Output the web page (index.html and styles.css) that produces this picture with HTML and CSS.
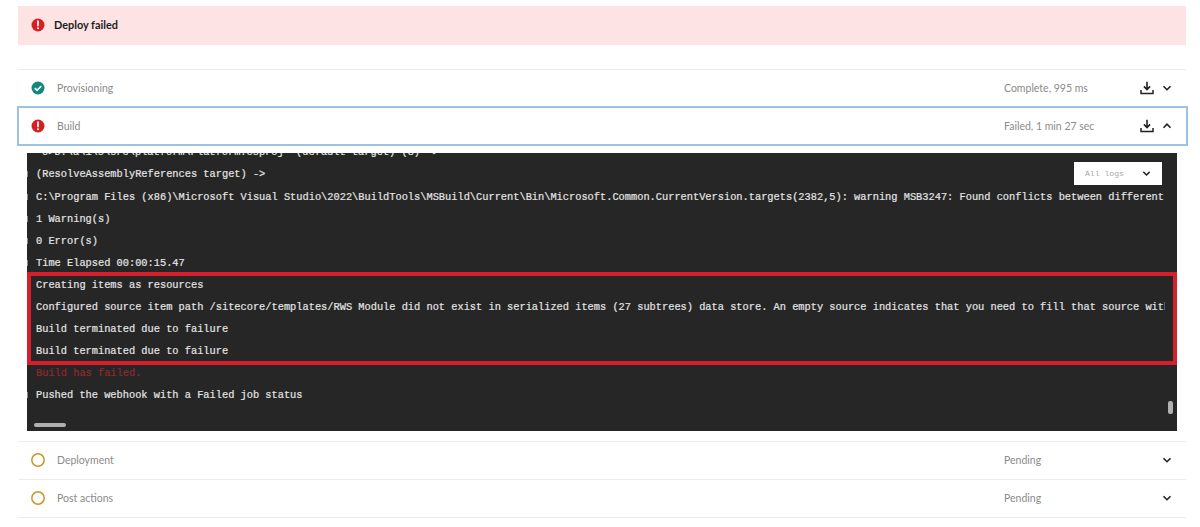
FILE: index.html
```html
<!DOCTYPE html>
<html lang="en">
<head>
<meta charset="utf-8">
<title>Deploy failed</title>
<link rel="stylesheet" href="styles.css">
</head>
<body>
<svg class="sprites" width="0" height="0" aria-hidden="true">
  <symbol id="i-alert" viewBox="0 0 14 14"><circle cx="7" cy="7" r="6.5" fill="#d32121"/><path d="M7 3.2v4.4" stroke="#fff" stroke-width="1.7" stroke-linecap="round"/><circle cx="7" cy="10.2" r="1" fill="#fff"/></symbol>
  <symbol id="i-check" viewBox="0 0 14 14"><circle cx="7" cy="7" r="6.5" fill="#0f8a7a"/><path d="M3.8 7.2l2.3 2.2 4.2-4.4" fill="none" stroke="#fff" stroke-width="1.7"/></symbol>
  <symbol id="i-pending" viewBox="0 0 14 14"><circle cx="7" cy="7" r="6.2" fill="none" stroke="#c9962b" stroke-width="1.5"/></symbol>
  <symbol id="i-download" viewBox="0 0 14 14"><path d="M7 .8v7.4M3.9 5.4L7 8.5l3.1-3.1" fill="none" stroke="#222" stroke-width="1.6"/><path d="M1 9v3.6h12V9" fill="none" stroke="#222" stroke-width="1.5"/></symbol>
  <symbol id="i-down" viewBox="0 0 10 10"><path d="M1.5 3.2L5 6.7l3.5-3.5" fill="none" stroke="#222" stroke-width="1.6"/></symbol>
  <symbol id="i-up" viewBox="0 0 10 10"><path d="M1.5 6.7L5 3.2l3.5 3.5" fill="none" stroke="#222" stroke-width="1.6"/></symbol>
</svg>
<main class="page">
  <div class="banner">
    <svg class="icon"><use href="#i-alert"/></svg>
    <strong>Deploy failed</strong>
  </div>
  <section class="steps">
    <div class="row">
      <svg class="icon"><use href="#i-check"/></svg>
      <span class="label">Provisioning</span>
      <span class="status">Complete, 995 ms</span>
      <svg class="dl"><use href="#i-download"/></svg>
      <svg class="chev"><use href="#i-down"/></svg>
    </div>
    <div class="row row-open">
      <svg class="icon"><use href="#i-alert"/></svg>
      <span class="label">Build</span>
      <span class="status">Failed, 1 min 27 sec</span>
      <svg class="dl"><use href="#i-download"/></svg>
      <svg class="chev"><use href="#i-up"/></svg>
    </div>
    <div class="terminal">
      <div class="log">
        <div class="line indent">0&gt;D:\a\1\s\src\platform\Platform.csproj" (default target) (8) -&gt;</div>
        <div class="line mark">(ResolveAssemblyReferences target) -&gt;</div>
        <div class="line mark">C:\Program Files (x86)\Microsoft Visual Studio\2022\BuildTools\MSBuild\Current\Bin\Microsoft.Common.CurrentVersion.targets(2382,5): warning MSB3247: Found conflicts between different versions</div>
        <div class="line mark">1 Warning(s)</div>
        <div class="line mark">0 Error(s)</div>
        <div class="line mark">Time Elapsed 00:00:15.47</div>
        <div class="line">Creating items as resources</div>
        <div class="line">Configured source item path /sitecore/templates/RWS Module did not exist in serialized items (27 subtrees) data store. An empty source indicates that you need to fill that source with items</div>
        <div class="line">Build terminated due to failure</div>
        <div class="line">Build terminated due to failure</div>
        <div class="line failed">Build has failed.</div>
        <div class="line mark">Pushed the webhook with a Failed job status</div>
      </div>
      <div class="filter"><span>All logs</span><svg class="chev-small"><use href="#i-down"/></svg></div>
      <div class="highlight"></div>
      <div class="thumb-h"></div>
      <div class="thumb-v"></div>
    </div>
    <div class="row">
      <svg class="icon"><use href="#i-pending"/></svg>
      <span class="label">Deployment</span>
      <span class="status">Pending</span>
      <span></span>
      <svg class="chev"><use href="#i-down"/></svg>
    </div>
    <div class="row row-last">
      <svg class="icon"><use href="#i-pending"/></svg>
      <span class="label">Post actions</span>
      <span class="status">Pending</span>
      <span></span>
      <svg class="chev"><use href="#i-down"/></svg>
    </div>
  </section>
</main>
</body>
</html>
```
FILE: styles.css
```css
* { box-sizing: border-box; }
html, body { margin: 0; height: 100%; background: #fff; overflow: hidden; }
body { font-family: Lato, "Noto Sans", sans-serif; font-size: 10.5px; color: #222; }
.sprites { position: absolute; }
.page { padding: 6px 14px 0 18px; }
.banner {
  height: 39px;
  display: flex;
  align-items: center;
  gap: 9px;
  padding: 0 0 2px 13px;
  background: #fde3e3;
  font-size: 10.9px;
}
.banner strong { font-weight: 700; color: #1c1c1c; }
.icon { width: 14px; height: 14px; flex: none; }
.steps { margin-top: 24px; }
.row {
  height: 38px;
  display: grid;
  grid-template-columns: 26px 1fr 136px 17px 19px;
  align-items: center;
  padding: 0 10px 2px 13px;
  border-top: 1px solid #ececec;
  color: #8b8b8b;
}
.row-open {
  height: 40px;
  margin: -1px -2px 0 -1px;
  padding: 0 10px 1px 12px;
  border: 2px solid #9cc4e2;
}
.row-last { height: 39px; border-bottom: 1px solid #ececec; }
.label, .status { line-height: 14px; }
.dl { width: 14px; height: 14px; }
.chev { width: 10px; height: 10px; justify-self: center; }
.terminal {
  position: relative;
  height: 278px;
  margin: 7px 9px 10px 9px;
  background: #262626;
  overflow: hidden;
}
.log {
  margin-top: -11.7px;
  padding: 0 12px 0 9px;
  font-family: "Liberation Mono", "Courier New", monospace;
  font-size: 10.33px;
  line-height: 22.1px;
  color: #e4e4e4;
  -webkit-text-stroke: 0.2px #e4e4e4;
}
.line { position: relative; white-space: nowrap; overflow: hidden; }
.mark { overflow: visible; max-width: 1129px; clip-path: inset(0 0 0 -9px); }
.mark::before {
  content: "";
  position: absolute;
  left: -9px;
  top: 8px;
  width: 1px;
  height: 6px;
  background: #8a8a8a;
}
.indent { padding-left: 6px; }
.failed { color: #8e2a2a; -webkit-text-stroke: 0.2px #8e2a2a; }
.filter {
  position: absolute;
  top: 9px;
  right: 15px;
  width: 88px;
  height: 23px;
  display: flex;
  align-items: center;
  justify-content: space-between;
  padding: 0 11px 0 11px;
  background: #fff;
  font-family: "Liberation Mono", monospace;
  font-size: 8.1px;
  color: #a8a8a8;
}
.chev-small { width: 9px; height: 9px; }
.highlight {
  position: absolute;
  top: 119px;
  left: 0;
  right: 0;
  height: 93px;
  border: 4px solid #d71f2b;
}
.thumb-h {
  position: absolute;
  left: 7px;
  bottom: 4px;
  width: 32px;
  height: 4px;
  border-radius: 2px;
  background: #b0b0b0;
}
.thumb-v {
  position: absolute;
  right: 4px;
  bottom: 17px;
  width: 5px;
  height: 13px;
  border-radius: 2px;
  background: #b0b0b0;
}
```
